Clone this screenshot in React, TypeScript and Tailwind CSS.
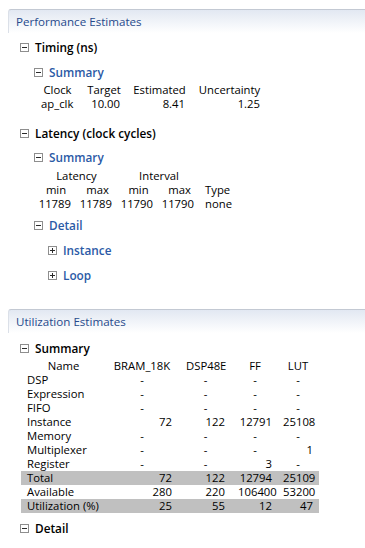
import React from "react";

const Box = ({ plus }: { plus?: boolean }) => (
  <span className="relative inline-block w-[9px] h-[9px] border border-[#8e8e8e] bg-white shrink-0">
    <span className="absolute left-[1px] top-[3px] w-[5px] h-[1px] bg-[#2a2a2a]" />
    {plus && <span className="absolute left-[3px] top-[1px] w-[1px] h-[5px] bg-[#2a2a2a]" />}
  </span>
);

const Node = ({
  label,
  x,
  mt,
  blue,
  plus,
}: {
  label: string;
  x: string;
  mt: string;
  blue?: boolean;
  plus?: boolean;
}) => (
  <div className={`flex items-center h-[14px] ${x} ${mt}`}>
    <Box plus={plus} />
    <span
      className={`ml-[6px] font-semibold text-[11.8px] leading-[14px] ${blue ? "text-[#2b5aa6]" : "text-black"}`}
    >
      {label}
    </span>
  </div>
);

const Header = ({ title, mt }: { title: string; mt: string }) => (
  <div
    className={`ml-[8px] ${mt} h-[24px] shrink-0 rounded-tl-[3px] border-t border-l border-t-[#c3c9d3] border-l-[#dbe0e8] bg-linear-to-b from-[#e2e8f2] to-white flex items-center pl-[7px] text-[11.6px] text-[#274a8c]`}
  >
    {title}
  </div>
);

const utilRows: [string, string, string, string, string, boolean?][] = [
  ["DSP", "-", "-", "-", "-"],
  ["Expression", "-", "-", "-", "-"],
  ["FIFO", "-", "-", "-", "-"],
  ["Instance", "72", "122", "12791", "25108"],
  ["Memory", "-", "-", "-", "-"],
  ["Multiplexer", "-", "-", "-", "1"],
  ["Register", "-", "-", "3", "-"],
  ["Total", "72", "122", "12794", "25109", true],
  ["Available", "280", "220", "106400", "53200"],
  ["Utilization (%)", "25", "55", "12", "47", true],
];

const Num = ({ v, pl, pr }: { v: string; pl: string; pr: string }) =>
  v === "-" ? (
    <div className={`${pl} ${pr} text-center`}>-</div>
  ) : (
    <div className={`${pl} ${pr} text-right`}>{v}</div>
  );

export default function App() {
  return (
    <div
      className="w-[365px] h-[548px] bg-white overflow-hidden flex flex-col text-[11.3px] leading-[14px] text-black"
      style={{ fontFamily: '"Open Sans", "Noto Sans", sans-serif' }}
    >
      <Header title="Performance Estimates" mt="mt-[9px]" />

      <Node label="Timing (ns)" x="ml-[20px]" mt="mt-[7px]" />
      <Node label="Summary" x="ml-[34px]" mt="mt-[11px]" blue />

      <div className="ml-[34px] mt-[4px] grid grid-cols-[47px_46px_65px_75px] auto-rows-[14px] w-max">
        <div className="text-center">Clock</div>
        <div className="text-center">Target</div>
        <div className="text-center">Estimated</div>
        <div className="text-center">Uncertainty</div>
        <div className="pl-[7px]">ap_clk</div>
        <div className="pr-[7px] text-right">10.00</div>
        <div className="pr-[7px] text-right">8.41</div>
        <div className="pr-[7px] text-right">1.25</div>
      </div>

      <Node label="Latency (clock cycles)" x="ml-[20px]" mt="mt-[15px]" />
      <Node label="Summary" x="ml-[34px]" mt="mt-[10px]" blue />

      <div className="ml-[35px] mt-[5px] grid grid-cols-[42px_41px_41px_41px_37px] auto-rows-[14px] w-max">
        <div className="col-span-2 text-center">Latency</div>
        <div className="col-span-2 text-center">Interval</div>
        <div />
        <div className="text-center">min</div>
        <div className="text-center">max</div>
        <div className="text-center">min</div>
        <div className="text-center">max</div>
        <div className="pl-[5px]">Type</div>
        <div className="pr-[6px] text-right">11789</div>
        <div className="pr-[6px] text-right">11789</div>
        <div className="pr-[6px] text-right">11790</div>
        <div className="pr-[6px] text-right">11790</div>
        <div className="pl-[5px]">none</div>
      </div>

      <Node label="Detail" x="ml-[34px]" mt="mt-[7px]" blue />
      <Node label="Instance" x="ml-[48px]" mt="mt-[11px]" blue plus />
      <Node label="Loop" x="ml-[48px]" mt="mt-[11px]" blue plus />

      <Header title="Utilization Estimates" mt="mt-[27px]" />

      <Node label="Summary" x="ml-[20px]" mt="mt-[8px]" />

      <div className="ml-[21px] mt-[4px] w-[298px] flex flex-col">
        <div className="grid grid-cols-[85px_69px_53px_47px_44px] h-[14px]">
          <div className="text-center">Name</div>
          <div className="pl-[6px] pr-[3px] text-center">BRAM_18K</div>
          <div className="pl-[11px] pr-[3px] text-center">DSP48E</div>
          <div className="pl-[10px] pr-[3px] text-center">FF</div>
          <div className="pl-[8px] pr-[6px] text-center">LUT</div>
        </div>
        {utilRows.map(([n, a, b, c, d, g]) => (
          <div
            key={n}
            className={`grid grid-cols-[85px_69px_53px_47px_44px] h-[14px] ${g ? "bg-[#c0c0c0]" : ""}`}
          >
            <div className="pl-[6px] whitespace-nowrap">{n}</div>
            <Num v={a} pl="pl-[6px]" pr="pr-[3px]" />
            <Num v={b} pl="pl-[11px]" pr="pr-[3px]" />
            <Num v={c} pl="pl-[10px]" pr="pr-[3px]" />
            <Num v={d} pl="pl-[8px]" pr="pr-[6px]" />
          </div>
        ))}
      </div>

      <Node label="Detail" x="ml-[20px]" mt="mt-[8px]" />
    </div>
  );
}
